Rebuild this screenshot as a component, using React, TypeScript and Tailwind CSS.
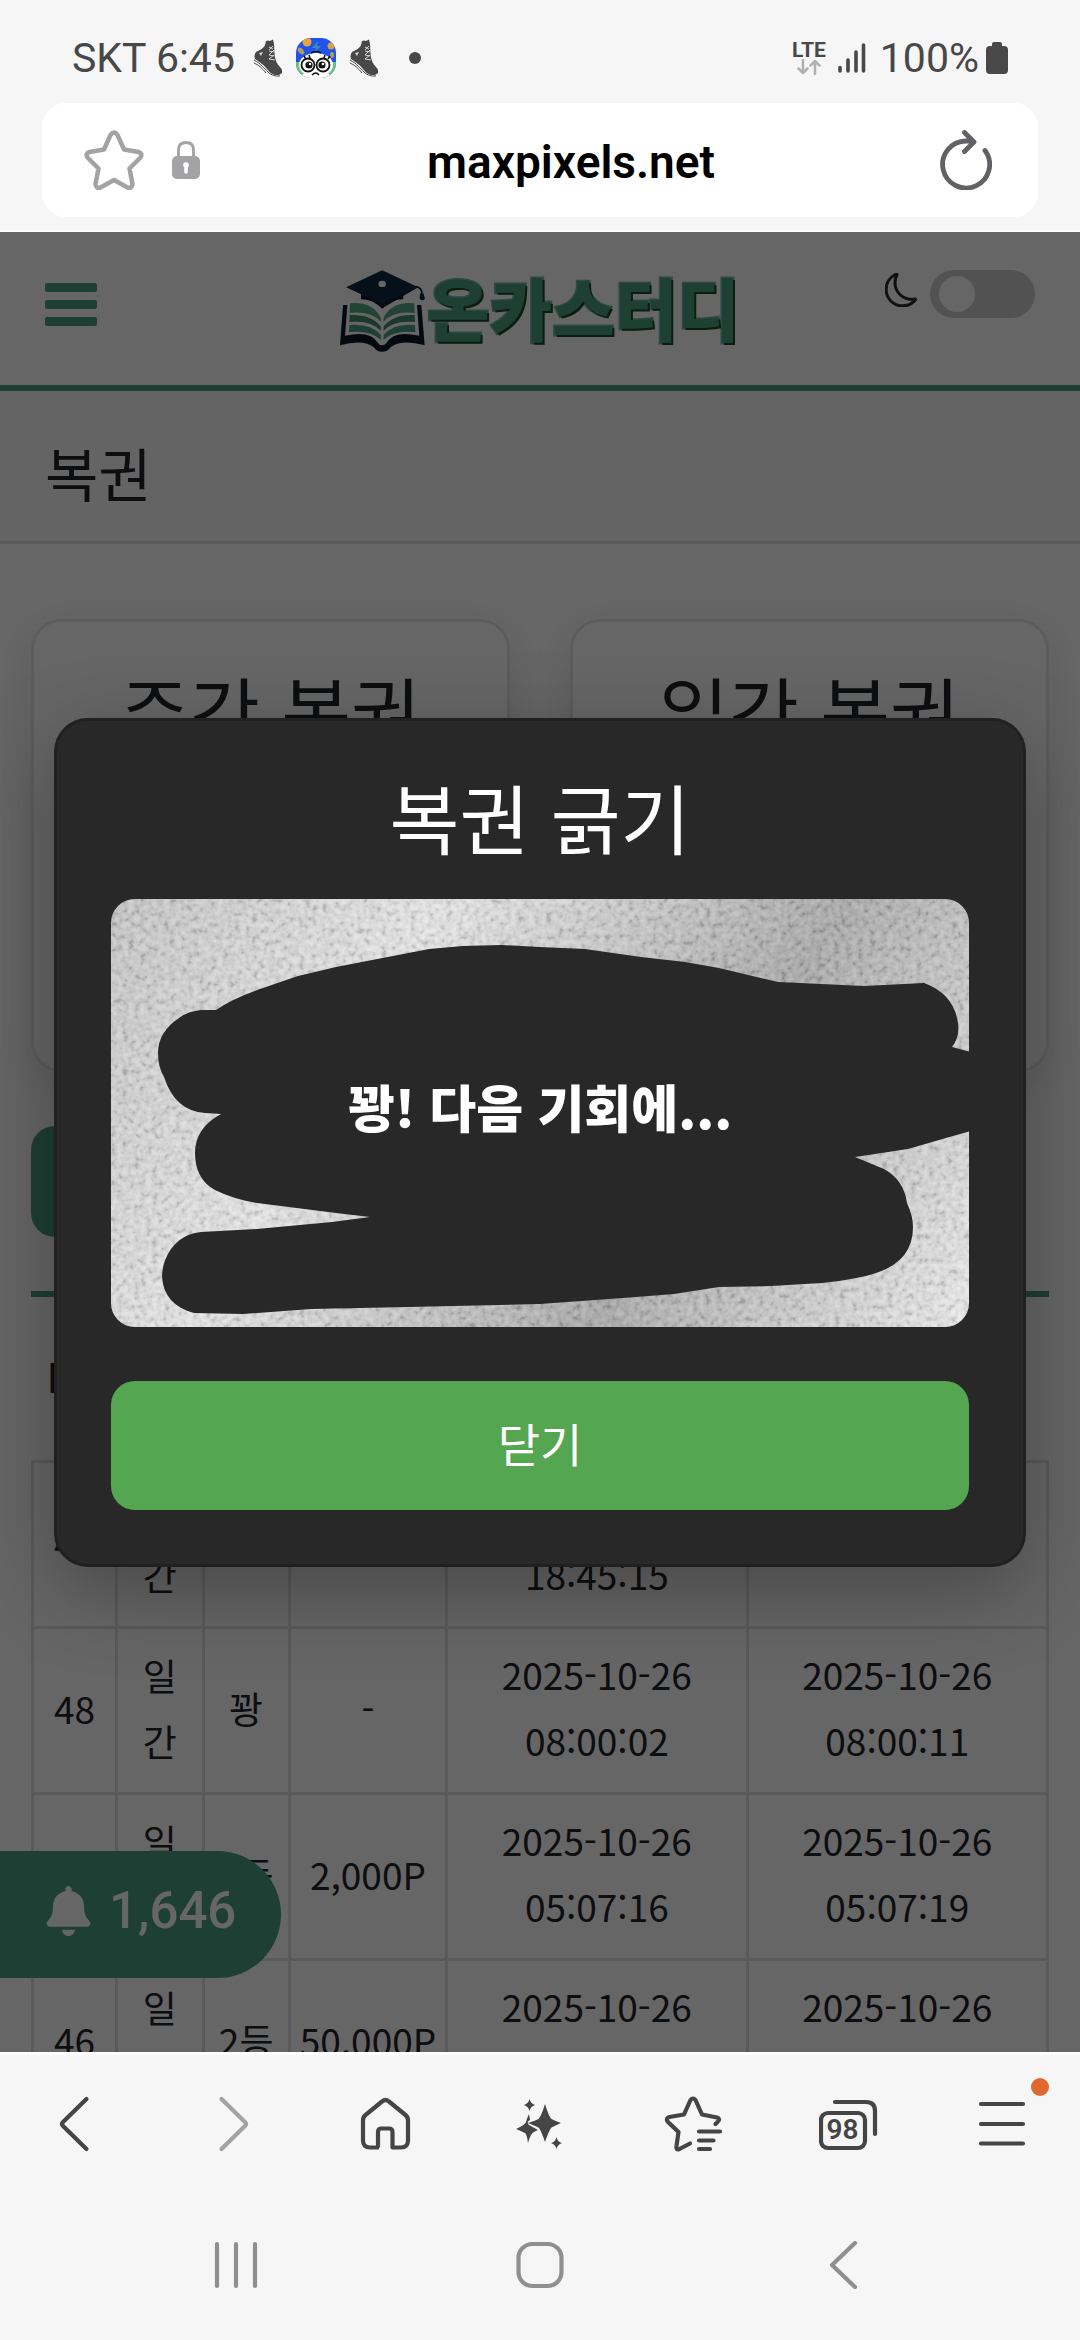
import React from 'react';
import { BsMoon } from 'react-icons/bs';
import { FaBell } from 'react-icons/fa6';

interface LotteryRow {
  no: number;
  kind: string;
  result: string;
  amount: string;
  boughtAt: string;
  checkedAt: string;
}

const rows: LotteryRow[] = [
  { no: 49, kind: '일간', result: '', amount: '', boughtAt: '2025-10-26 18:45:15', checkedAt: '' },
  { no: 48, kind: '일간', result: '꽝', amount: '-', boughtAt: '2025-10-26 08:00:02', checkedAt: '2025-10-26 08:00:11' },
  { no: 47, kind: '일간', result: '3등', amount: '2,000P', boughtAt: '2025-10-26 05:07:16', checkedAt: '2025-10-26 05:07:19' },
  { no: 46, kind: '일간', result: '2등', amount: '50,000P', boughtAt: '2025-10-26', checkedAt: '2025-10-26' },
];

const Boot: React.FC = () => (
  <svg viewBox="0 0 30 38" className="w-[30px] h-[38px]" fill="none">
    <path d="M13 2 L15 1.500 L17 2 L20 .5 L21 5 L21.500 15 C22 21 24 25 27 28 C29 30 29.500 32 29 34 L26 36 C20 36.500 17 34 14 30 C10 25 5 22 2 20 C1 18 1.500 15 3 13 C7 11 11 9 12 6Z" fill="#484848" />
    <path d="M1 21 C8 25 11 29 15 33 C18 36 22 37.500 27 37 M1 24 C6 26 10 30 13 34" stroke="#484848" strokeWidth="1" />
    <path d="M16 8 l4 2 M16 12 l5 1 M16 16 l5 1 M16 20 l6 1 M20 7 l-4 4 M21 11 l-5 5 M21 16 l-5 4" stroke="#f5f5f5" strokeWidth=".8" />
    <path d="M6 14 l4 -1 -2 4z" fill="#d5d5d5" />
  </svg>
);

const MascotIcon: React.FC = () => (
  <svg viewBox="0 0 40 40" className="w-10 h-10" fill="none">
    <clipPath id="mascot">
      <rect width="40" height="40" rx="15" />
    </clipPath>
    <g clipPath="url(#mascot)">
      <rect width="40" height="40" fill="#2152ea" />
      <rect y="24" width="40" height="16" fill="#68c47a" />
      <ellipse cx="20" cy="27" rx="17" ry="12" fill="#fff" />
      <ellipse cx="20" cy="38" rx="14" ry="5" fill="#fff" />
      <circle cx="11" cy="4" r="4.500" fill="#e8a63a" />
      <circle cx="35" cy="8" r="3.500" fill="#d8a03c" />
      <ellipse cx="5" cy="13" rx="2.500" ry="4" transform="rotate(-40 5 13)" fill="#b79a5d" />
      <ellipse cx="36" cy="17" rx="2" ry="3" fill="#b79a5d" />
      <path d="M22 3 L16 10 H20 L18 15 L25 8 H21Z" fill="#3d8cb5" />
      <path d="M15 15 q5 -3 10 0 M10 21 l-2 -3 M14 20 l-1 -3 M28 20 l1 -3 M32 21 l2 -3" stroke="#111" strokeWidth="1.500" />
      <circle cx="12" cy="27" r="6.500" fill="#fff" stroke="#111" strokeWidth="1.800" />
      <circle cx="27" cy="27" r="6.500" fill="#fff" stroke="#111" strokeWidth="1.800" />
      <circle cx="13" cy="27" r="3.600" fill="#111" />
      <circle cx="26" cy="27" r="3.600" fill="#111" />
      <circle cx="14" cy="26" r="1.300" fill="#fff" />
      <circle cx="27" cy="26" r="1.300" fill="#fff" />
      <path d="M16 37 q4 -4 7 0" stroke="#111" strokeWidth="1.600" />
    </g>
  </svg>
);

const StatusBar: React.FC = () => (
  <div className="flex items-center justify-between h-[103px] pt-3 pl-[72px] pr-[72px] text-[41px] leading-[48px] text-[#484848]">
    <div className="flex items-center">
      <span className="mr-[18px]">SKT 6:45</span>
      <Boot />
      <span className="mx-[13px]"><MascotIcon /></span>
      <Boot />
      <span className="ml-[30px] w-3 h-3 rounded-full bg-[#484848]"></span>
    </div>
    <div className="flex items-center">
      <div className="flex flex-col items-center mr-3">
        <span className="text-[21px] leading-[18px] font-bold">LTE</span>
        <svg viewBox="0 0 24 16" className="w-6 h-4" fill="none" stroke="#b0b0b0" strokeWidth="2.500" strokeLinecap="round" strokeLinejoin="round">
          <path d="M6 1 V14 M1.500 9.500 L6 14 L10.500 9.500 M18 15 V2 M13.500 6.500 L18 2 L22.500 6.500" />
        </svg>
      </div>
      <svg viewBox="0 0 28 30" className="w-7 h-[30px] mr-[14px]" stroke="#484848" strokeWidth="3.600" strokeLinecap="round">
        <path d="M2 24.500 V28 M10 17 V28 M18 9 V28 M25.500 2 V28" />
      </svg>
      <span className="mr-[7px]">100%</span>
      <svg viewBox="0 0 22 32" className="w-[22px] h-8" fill="#484848">
        <rect x="6" y="0" width="10" height="7" rx="2" />
        <rect x="0" y="4" width="22" height="28" rx="4" />
      </svg>
    </div>
  </div>
);

const AddressBar: React.FC = () => (
  <div className="mx-[42px] h-[114px] rounded-[24px] bg-white flex items-center justify-between pl-[42px] pr-[46px]">
    <div className="flex items-center gap-7 w-[186px]">
      <button type="button" aria-label="북마크">
        <svg viewBox="0 0 60 60" className="w-[60px] h-[60px]" fill="none" stroke="#a3a3a5" strokeWidth="4.500" strokeLinejoin="round">
          <path d="M26.500 5 Q30 0 33.500 5 L40 19.500 L54.500 22 Q59 23.500 56.500 27.500 L45.500 38.500 L48.500 54 Q48 59 43.500 57.500 L30 50 L16.500 57.500 Q12 59 11.500 54 L14.500 38.500 L3.500 27.500 Q1 23.500 5.500 22 L20 19.500Z" />
        </svg>
      </button>
      <svg viewBox="0 0 28 38" className="w-7 h-[38px]" fill="none">
        <path d="M6.500 16 V9 Q6.500 1.500 14 1.500 Q21.500 1.500 21.500 9 V16" stroke="#a3a3a5" strokeWidth="2.800" />
        <rect x="0" y="15" width="28" height="23" rx="5" fill="#a3a3a5" />
        <path d="M14 24 V31" stroke="#fff" strokeWidth="3.500" strokeLinecap="round" />
        <circle cx="14" cy="24" r="2.800" fill="#fff" />
      </svg>
    </div>
    <a href="#top" className="pt-1 text-[46px] leading-[54px] font-semibold text-black">maxpixels.net</a>
    <div className="w-[120px] flex justify-end">
      <button type="button" aria-label="새로고침">
        <svg viewBox="0 0 52 60" className="w-[52px] h-[60px]" fill="none" stroke="#626266" strokeWidth="4.800" strokeLinecap="round" strokeLinejoin="round">
          <path d="M45 20.500 A23.500 23.500 0 1 1 26 11 H32 M24.500 2.500 L34 12 L24.500 21.500" />
        </svg>
      </button>
    </div>
  </div>
);

const LogoBook: React.FC = () => (
  <svg viewBox="34 44 254 244" className="w-[85px] h-[82px]">
    <path d="M52 95 L160 44 L268 95 L160 158 L142 143 Q125 130 97 130 V116Z" fill="#0f2841" />
    <path d="M97 116 L160 146 L223 116 V131 Q190 130 160 159 Q130 130 97 131Z" fill="#081826" />
    <ellipse cx="160" cy="85" rx="11" ry="9.500" fill="#fff" />
    <path d="M262 93 Q278 96 279 114" fill="none" stroke="#0f2841" strokeWidth="5" />
    <path d="M273 114 H284 L288 130 Q280 138 272 130Z" fill="#0f2841" />
    <path d="M43 148 H56 L49 240 Q125 222 148 262 Q160 275 172 262 Q195 222 271 240 L264 148 H277 L287 268 Q215 250 184 275 Q176 288 160 288 Q144 288 136 275 Q105 250 34 268Z" fill="#081826" />
    <path d="M64 143 Q130 136 156 186 V198 Q125 165 63 172Z" fill="#5ba98a" />
    <path d="M256 143 Q190 136 164 186 V198 Q195 165 257 172Z" fill="#5ba98a" />
    <path d="M63 178 Q125 174 156 212 V225 Q125 192 62 199Z" fill="#458c74" />
    <path d="M257 178 Q195 174 164 212 V225 Q195 192 258 199Z" fill="#458c74" />
    <path d="M62 208 Q125 202 156 238 V252 Q125 222 61 229Z" fill="#4b9e80" />
    <path d="M258 208 Q195 202 164 238 V252 Q195 222 259 229Z" fill="#4b9e80" />
  </svg>
);

const SiteHeader: React.FC = () => (
  <header className="flex items-start justify-between h-[159px] px-[45px] border-b-[6px] border-[#4b9e80] bg-white">
    <div className="w-[150px] pt-[51px]">
      <button type="button" aria-label="메뉴" className="block">
        <svg viewBox="0 0 52 43" className="w-[52px] h-[43px]" fill="#4b9e80">
          <rect width="52" height="9" rx="2" />
          <rect y="17" width="52" height="9" rx="2" />
          <rect y="34" width="52" height="9" rx="2" />
        </svg>
      </button>
    </div>
    <a href="#home" className="flex items-start pt-[38px]">
      <LogoBook />
      <span className="ml-[2px] text-[68px] leading-[74px] font-black text-[#4b9e80] [-webkit-text-stroke:3px_#6fb8a6] [paint-order:stroke_fill] [text-shadow:2px_2px_0_#1c4a24]">온카스터디</span>
    </a>
    <label className="flex items-center gap-[11px] pt-[38px] w-[150px] justify-end">
      <BsMoon className="w-[34px] h-[34px] mb-2 text-[#212529]" strokeWidth=".4" />
      <input type="checkbox" aria-label="다크 모드" className="appearance-none w-[105px] h-12 rounded-full bg-[#cccccc] before:block before:w-9 before:h-9 before:m-[6px] before:ml-[9px] before:rounded-full before:bg-white" />
    </label>
  </header>
);

const LotteryTable: React.FC = () => (
  <table className="w-full table-fixed border-collapse text-center text-[37px] leading-[66px]">
    <colgroup>
      <col className="w-[8.3%]" />
      <col className="w-[8.5%]" />
      <col className="w-[8.5%]" />
      <col className="w-[15.500%]" />
      <col />
      <col />
    </colgroup>
    <thead>
      <tr className="h-[164px] text-[40px]">
        <th className="pb-1 font-bold">No</th>
        <th></th>
        <th></th>
        <th></th>
        <th></th>
        <th></th>
      </tr>
    </thead>
    <tbody>
      {rows.map(row => (
        <tr key={row.no} className="h-[166px]">
          <td className="border-[3px] border-[#dee2e6] pb-1">{row.no}</td>
          <td className="border-[3px] border-[#dee2e6] px-3 pb-1">{row.kind}</td>
          <td className="border-[3px] border-[#dee2e6] px-3 pb-1">{row.result}</td>
          <td className="border-[3px] border-[#dee2e6] pb-1">{row.amount}</td>
          <td className="border-[3px] border-[#dee2e6] px-4 align-top pt-3">{row.boughtAt}</td>
          <td className="border-[3px] border-[#dee2e6] px-4 align-top pt-3">{row.checkedAt}</td>
        </tr>
      ))}
    </tbody>
  </table>
);

const ScratchCard: React.FC = () => (
  <div className="relative rounded-[24px] overflow-hidden">
    <svg viewBox="0 0 858 428" className="block w-full">
      <defs>
        <linearGradient id="silver" gradientUnits="userSpaceOnUse" x1="0" y1="0" x2="825" y2="486">
          <stop offset="0" stopColor="#c4c4c4" />
          <stop offset=".3" stopColor="#e6e6e6" />
          <stop offset=".66" stopColor="#a8a8a8" />
          <stop offset="1" stopColor="#ececec" />
        </linearGradient>
        <filter id="grain" x="0" y="0" width="100%" height="100%">
          <feTurbulence type="fractalNoise" baseFrequency=".17" numOctaves="2" seed="4" />
          <feColorMatrix values="2 0 0 0 -.5  2 0 0 0 -.5  2 0 0 0 -.5  0 0 0 0 1" />
        </filter>
      </defs>
      <rect width="858" height="428" fill="url(#silver)" />
      <rect width="858" height="428" filter="url(#grain)" opacity=".17" />
      <path
        fill="#282828"
        d="M105 111 L90 111 Q77 112 68 119 Q47 133 47 154 Q47 168 53 178 Q64 212 94 214 L110 215 Q84 229 84 254 Q84 280 104 291 Q122 300 146 304 L225 314 L259 318 L221 323 L146 330 L90 333 Q71 335 60 350 Q51 363 51 378 Q53 406 83 414 L132 415 L200 410 L297 408 L429 405 L512 399 L563 395 L608 388 L660 387 L711 384 Q747 380 765 374 Q802 362 802 328 Q802 317 796 304 Q793 281 773 270 L744 258 L797 250 L835 239 L860 232 V153 L841 148 Q849 138 847 124 Q843 95 813 84 L753 87 L667 83 L608 69 L574 63 L530 58 L474 50 L429 48 L390 46 L352 47 L318 50 L225 68 L187 77 L152 89 Q122 99 105 111Z"
      />
    </svg>
    <p className="absolute inset-0 flex items-center justify-center pb-3 text-[51px] font-black text-white">꽝! 다음 기회에...</p>
  </div>
);

const ScratchModal: React.FC = () => (
  <div className="absolute inset-0 flex items-center justify-center bg-black/60 px-[54px]">
    <div role="dialog" aria-labelledby="scratch-title" className="w-full rounded-[34px] border-[3px] border-[#202020] bg-[#282828] p-[54px] shadow-[0_24px_84px_rgba(0,0,0,0.3)] text-center text-white">
      <h2 id="scratch-title" className="mb-[42px] text-[76px] leading-[82px]">복권 긁기</h2>
      <ScratchCard />
      <button type="button" className="mt-[54px] w-full h-[129px] pb-[6px] rounded-[24px] bg-[#55a651] text-[46px] leading-[66px]">닫기</button>
    </div>
  </div>
);

const iconClass = 'w-[60px] h-[60px]';

const BrowserToolbar: React.FC = () => (
  <nav className="grid grid-cols-7 h-[138px] items-center justify-items-center">
    <button type="button" aria-label="뒤로">
      <svg viewBox="0 0 60 60" className={iconClass} fill="none" stroke="#454545" strokeWidth="4.200" strokeLinecap="round" strokeLinejoin="round">
        <path d="M39.500 5 L16 28 Q14 30 16 32 L39.500 55" />
      </svg>
    </button>
    <button type="button" aria-label="앞으로">
      <svg viewBox="0 0 60 60" className={iconClass} fill="none" stroke="#a3a3a3" strokeWidth="4.200" strokeLinecap="round" strokeLinejoin="round">
        <path d="M20.500 5 L44 28 Q46 30 44 32 L20.500 55" />
      </svg>
    </button>
    <button type="button" aria-label="홈">
      <svg viewBox="0 0 60 60" className={iconClass} fill="none" stroke="#454545" strokeWidth="4.200" strokeLinejoin="round">
        <path d="M23 53.500 H14 Q7 53.500 7 46.500 V26.500 Q7 23 9.500 21 L26 7.500 Q29.500 4.500 33 7.500 L49.500 21 Q52 23 52 26.500 V46.500 Q52 53.500 45 53.500 H36.500 V38 Q36.500 34.500 33 34.500 H25.500 Q22 34.500 22 38 V53.500" />
      </svg>
    </button>
    <button type="button" aria-label="AI 도구">
      <svg viewBox="0 0 60 60" className={iconClass} fill="#454545">
        <path d="M35 10 Q39 23 41.500 25 Q44 26.500 51 29 Q44 32 41.500 33.500 Q39 36 35 48 Q31 36 28.500 33.500 Q26 32 18 29 Q26 26.500 28.500 25 Q31 23 35 10Z" />
        <path d="M19 20 Q17 24 16 28 Q15 31 6 35 Q14 38 15.500 39.500 Q17 41 18 49 Q20 42 22 39.500 Q23 38 28 36 L19 31 Q16 28 20 26Z" />
        <path d="M19.500 5 Q20.500 9.500 25 11 Q20.500 12.500 19.500 17 Q18.500 12.500 14 11 Q18.500 9.500 19.500 5Z" />
        <path d="M46.500 43 Q47.500 48 52 49 Q47.500 50.500 46.500 55 Q45.500 50.500 41 49 Q45.500 48 46.500 43Z" />
      </svg>
    </button>
    <button type="button" aria-label="북마크 목록">
      <svg viewBox="0 0 60 60" className={iconClass} fill="none" stroke="#454545" strokeWidth="4.200" strokeLinecap="round" strokeLinejoin="round">
        <path d="M26 49.500 L15.500 55 Q11.500 56.500 12.500 52 L14.500 38 L3.500 27.500 Q1.500 24 5.500 23 L20 20.500 L26.500 6 Q29 3 31.500 6 L38 20.500 L53 23.500 Q57 25 53.500 28 L51.500 30" />
        <path d="M35 37.500 H56 M35 46.500 H49.500 M35 55 H46" />
      </svg>
    </button>
    <button type="button" aria-label="탭" className="relative">
      <svg viewBox="0 0 60 60" className={iconClass} fill="none" stroke="#454545" strokeWidth="4.200" strokeLinecap="round" strokeLinejoin="round">
        <rect x="2" y="19" width="44" height="35" rx="7" />
        <path d="M16 8 H47 Q56 8 56 17 V40" />
      </svg>
      <span className="absolute left-0 top-5 w-12 text-center text-[28px] leading-8 font-semibold text-[#454545]">98</span>
    </button>
    <button type="button" aria-label="더보기" className="relative">
      <svg viewBox="0 0 60 60" className={iconClass} stroke="#454545" strokeWidth="4.200" strokeLinecap="round">
        <path d="M8 10 H50 M8 30 H50 M8 49.500 H50" />
      </svg>
      <span className="absolute -top-4 -right-4 w-[18px] h-[18px] rounded-full bg-[#de6830]"></span>
    </button>
  </nav>
);

const SystemNav: React.FC = () => (
  <nav className="grid grid-cols-3 h-[147px] px-[84px] pb-1 items-center justify-items-center">
    <button type="button" aria-label="최근 앱">
      <svg viewBox="0 0 48 48" className="w-12 h-12" stroke="#8f8f8f" strokeWidth="4.200" strokeLinecap="round">
        <path d="M5 3 V45 M24 3 V45 M43 3 V45" />
      </svg>
    </button>
    <button type="button" aria-label="홈 화면">
      <svg viewBox="0 0 48 48" className="w-12 h-12" fill="none" stroke="#8f8f8f" strokeWidth="4.200">
        <rect x="2.500" y="3" width="43" height="42" rx="14" />
      </svg>
    </button>
    <button type="button" aria-label="이전">
      <svg viewBox="0 0 48 48" className="w-12 h-12" fill="none" stroke="#8f8f8f" strokeWidth="4.200" strokeLinecap="round" strokeLinejoin="round">
        <path d="M35 2 L12 24 L35 46" />
      </svg>
    </button>
  </nav>
);

const App: React.FC = () => {
  return (
    <div lang="ko" className="h-screen flex flex-col bg-[#f6f6f6] font-[Roboto,'Noto_Sans_CJK_KR',sans-serif]">
      <div className="pb-[13px] border-b-2 border-[#fcfcfc]">
        <StatusBar />
        <AddressBar />
      </div>

      <main className="relative flex-1 min-h-0 overflow-hidden bg-white text-[#212529] font-['Noto_Sans_CJK_KR',sans-serif]">
        <SiteHeader />
        <h1 className="h-[153px] pt-[43px] px-[45px] border-b-[3px] border-[#dee2e6] bg-[#f9f9f9] text-[58px] leading-[76px]">복권</h1>

        <div className="px-[31px] pt-[75px]">
          <div className="grid grid-cols-2 gap-[60px] text-center text-[76px] leading-[82px]">
            <h2 className="h-[453px] pt-[46px] rounded-[30px] border-[3px] border-[#e6e6e6] bg-white shadow-[0_11px_42px_rgba(0,0,0,0.1)]">주간 복권</h2>
            <h2 className="h-[453px] pt-[46px] rounded-[30px] border-[3px] border-[#e6e6e6] bg-white shadow-[0_11px_42px_rgba(0,0,0,0.1)]">일간 복권</h2>
          </div>
          <button type="button" aria-label="복권 구매" className="block my-[54px] w-[400px] h-[111px] rounded-[24px] bg-[#4b9e80]"></button>
          <div className="border-t-[6px] border-[#4b9e80]">
            <LotteryTable />
          </div>
        </div>

        <button type="button" className="absolute left-0 bottom-[74px] flex items-center gap-[18px] h-[127px] pl-[46px] pr-[45px] pb-2 rounded-r-full bg-[#4b9e80] text-white font-[Roboto,sans-serif] text-[51px] leading-[60px] font-medium">
          <FaBell className="w-[45px] h-[50px]" />
          1,646
        </button>

        <ScratchModal />
      </main>

      <div className="border-t-[3px] border-white">
        <BrowserToolbar />
        <SystemNav />
      </div>
    </div>
  );
};

export default App;
